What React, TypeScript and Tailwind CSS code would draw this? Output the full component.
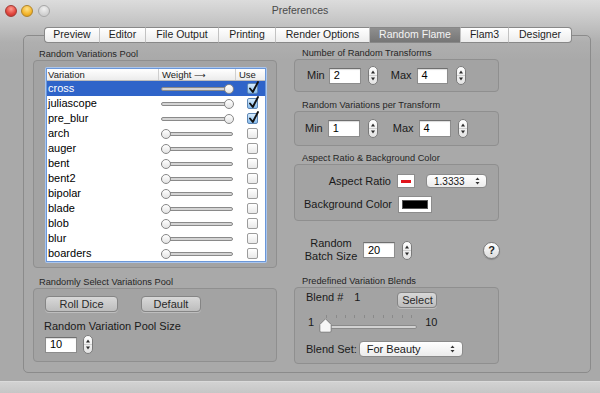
import React from "react";

const variations = [
  { name: "cross", on: true },
  { name: "juliascope", on: true },
  { name: "pre_blur", on: true },
  { name: "arch", on: false },
  { name: "auger", on: false },
  { name: "bent", on: false },
  { name: "bent2", on: false },
  { name: "bipolar", on: false },
  { name: "blade", on: false },
  { name: "blob", on: false },
  { name: "blur", on: false },
  { name: "boarders", on: false },
];

const tabs = [
  { label: "Preview", w: "w-[56px]" },
  { label: "Editor", w: "w-[46px]" },
  { label: "File Output", w: "w-[73px]" },
  { label: "Printing", w: "w-[57px]" },
  { label: "Render Options", w: "w-[94px]" },
  { label: "Random Flame", w: "w-[91px]", active: true },
  { label: "Flam3", w: "w-[48px]" },
  { label: "Designer", w: "w-[63px]" },
];

function Stepper({ className = "" }: { className?: string }) {
  return (
    <svg width="10" height="19" viewBox="0 0 10 19" className={"shrink-0 " + className}>
      <defs>
        <linearGradient id="stepg" x1="0" y1="0" x2="0" y2="1">
          <stop offset="0" stopColor="#ffffff" />
          <stop offset="1" stopColor="#e2e2e2" />
        </linearGradient>
      </defs>
      <rect x="0.5" y="0.5" width="9" height="18" rx="4.5" fill="url(#stepg)" stroke="#7a7a7a" />
      <line x1="1" y1="9.5" x2="9" y2="9.5" stroke="#d0d0d0" />
      <path d="M3 7.5 L5 4.5 L7 7.5 Z" fill="#2a2a2a" />
      <path d="M3 11.5 L5 14.5 L7 11.5 Z" fill="#2a2a2a" />
    </svg>
  );
}

function Field({ value, className = "" }: { value: string; className?: string }) {
  return (
    <div
      className={
        "h-[16px] bg-white border border-[#8c8c8c] border-t-[#6f6f6f] shadow-[inset_0_1px_1px_rgba(0,0,0,0.15)] flex items-center pl-[4px] text-[11px] text-black " +
        className
      }
    >
      {value}
    </div>
  );
}

function PopupArrows() {
  return (
    <svg width="5" height="8" viewBox="0 0 5 8" className="shrink-0">
      <path d="M0.5 3 L2.5 0.5 L4.5 3 Z" fill="#333" />
      <path d="M0.5 5 L2.5 7.5 L4.5 5 Z" fill="#333" />
    </svg>
  );
}

function Check({ on }: { on: boolean }) {
  if (!on) {
    return (
      <div className="w-[11px] h-[11px] rounded-[2px] border border-[#9c9c9c] bg-linear-to-b from-white to-[#e9e9e9]" />
    );
  }
  return (
    <div className="relative w-[11px] h-[11px] rounded-[2px] border border-[#5f87b5] bg-linear-to-b from-[#d6ebfc] to-[#88bdee]">
      <svg width="12" height="14" viewBox="0 0 12 14" className="absolute left-[0px] top-[-4px]">
        <path d="M2 8.5 L4.8 12 L10 2" fill="none" stroke="#111" strokeWidth="1.9" strokeLinecap="round" strokeLinejoin="round" />
      </svg>
    </div>
  );
}

function Group({ className = "", children }: { className?: string; children?: React.ReactNode }) {
  return (
    <div className={"rounded-[4px] border border-[#8f8f8f] bg-[#a3a3a3] " + className}>{children}</div>
  );
}

function Button({ label, className = "" }: { label: string; className?: string }) {
  return (
    <div
      className={
        "h-[16px] rounded-[4px] border border-[#858585] bg-linear-to-b from-[#d8d8d8] to-[#bdbdbd] shadow-[0_1px_0_rgba(255,255,255,0.3)] flex items-center justify-center text-[11px] text-[#2a2a2a] " +
        className
      }
    >
      {label}
    </div>
  );
}

export default function App() {
  return (
    <div className="w-[600px] h-[393px] overflow-hidden flex flex-col font-['Liberation_Sans',Arial,sans-serif] text-[#1a1a1a] bg-[linear-gradient(to_bottom,#dcdcdc_0px,#c5c5c5_22px,#afafaf_42px,#a9a9a9_60px)]">
      {/* Title bar */}
      <div className="h-[22px] grid grid-cols-[1fr_auto_1fr] items-center">
        <div className="flex items-center pl-[5px] gap-[3px]">
          <div className="w-[12px] h-[12px] rounded-full border border-[#a23a34] bg-[radial-gradient(circle_at_50%_30%,#ff9b8f,#e0443c_60%,#b8302a)]" />
          <div className="w-[12px] h-[12px] rounded-full border border-[#b0842a] bg-[radial-gradient(circle_at_50%_30%,#ffe28a,#f3b52b_60%,#cf8e18)] ml-[1px]" />
          <div className="w-[12px] h-[12px] rounded-full border border-[#a6a6a6] bg-[radial-gradient(circle_at_50%_30%,#f0f0f0,#cfcfcf_70%)] ml-[2px]" />
        </div>
        <div className="text-[10.5px] text-[#4a4a4a]">Preferences</div>
        <div />
      </div>

      {/* Tabs */}
      <div className="mt-[5px] ml-[44px] h-[16px] flex relative z-10">
        {tabs.map((t, i) => (
          <div
            key={t.label}
            className={
              t.w +
              " h-full flex items-center justify-center text-[10.5px] border-y border-[#888888] " +
              (i === 0 ? "border-l rounded-l-[4px] " : "") +
              (i === tabs.length - 1 ? "border-r rounded-r-[4px] " : "border-r border-r-[#c2c2c2] ") +
              (t.active
                ? "bg-linear-to-b from-[#8f8f8f] to-[#767676] text-[#f4f4f4] border-r-[#6e6e6e]"
                : "bg-linear-to-b from-white to-[#ececec] text-[#1e1e1e]")
            }
          >
            {t.label}
          </div>
        ))}
      </div>

      {/* Tab box */}
      <div className="-mt-[8px] ml-[23px] w-[568px] h-[338px] rounded-[5px] border border-[#8b8b8b] flex pl-[9px] gap-[17px]">
        {/* Left column */}
        <div className="w-[244px] pt-[12px] flex flex-col">
          <div className="h-[12px] leading-[12px] pl-[6px] text-[9.25px] text-[#262626]">Random Variations Pool</div>
          <Group className="h-[208px] pt-[6px] pl-[11px]">
            <div className="w-[222px] p-[1px] rounded-[2px] bg-[#aac6ee]">
              <div className="border border-[#6b97d8] bg-white">
                <div className="h-[12px] flex border-b border-[#bdbdbd] bg-linear-to-b from-white to-[#ececec] text-[9.5px] leading-[11px] text-[#222]">
                  <div className="w-[111px] pl-[1px]">Variation</div>
                  <div className="w-[77px] border-l border-[#cfcfcf] pl-[3px]">
                    Weight <span className="font-['DejaVu_Sans'] text-[8px]">⟶</span>
                  </div>
                  <div className="flex-1 border-l border-[#cfcfcf] pl-[3px]">Use</div>
                </div>
                {variations.map((v, i) => (
                  <div
                    key={v.name}
                    className={
                      "h-[15px] flex items-center " + (i === 0 ? "bg-[#2f64c9] text-white" : "text-black")
                    }
                  >
                    <div className="w-[111px] pl-[1px] text-[11px]">{v.name}</div>
                    <div className="w-[77px] relative h-full flex items-center">
                      <div className="relative ml-[3px] w-[72px] h-[4px] rounded-full border border-[#8a8a8a] bg-[#d4d4d4]">
                        <div
                          className={
                            "absolute top-[-4px] w-[10px] h-[10px] rounded-full border border-[#888888] bg-linear-to-b from-white to-[#e4e4e4] " +
                            (v.on ? "left-[62px]" : "left-[-1px]")
                          }
                        />
                      </div>
                    </div>
                    <div className="flex-1 pl-[12px]">
                      <Check on={v.on} />
                    </div>
                  </div>
                ))}
              </div>
            </div>
          </Group>

          <div className="mt-[8px] h-[12px] leading-[12px] pl-[6px] text-[9.25px] text-[#262626]">
            Randomly Select Variations Pool
          </div>
          <Group className="h-[74px] pt-[7px] pl-[10px]">
            <div className="flex">
              <Button label="Roll Dice" className="ml-[1px] w-[73px]" />
              <Button label="Default" className="ml-[23px] w-[60px]" />
            </div>
            <div className="mt-[7px] h-[14px] leading-[14px] text-[11px] text-[#1a1a1a]">Random Variation Pool Size</div>
            <div className="mt-[2px] h-[19px] flex items-center">
              <Field value="10" className="ml-[1px] w-[32px]" />
              <Stepper className="ml-[6px]" />
            </div>
          </Group>
        </div>

        {/* Right column */}
        <div className="w-[205px] pt-[11px] flex flex-col">
          <div className="h-[12px] leading-[12px] pl-[8px] text-[9.25px] text-[#262626]">Number of Random Transforms</div>
          <Group className="h-[33px] flex items-center pl-[12px] text-[11px]">
            <span>Min</span>
            <Field value="2" className="ml-[4px] w-[32px]" />
            <Stepper className="ml-[7px]" />
            <span className="ml-[13px]">Max</span>
            <Field value="4" className="ml-[5px] w-[31px]" />
            <Stepper className="ml-[8px]" />
          </Group>

          <div className="mt-[7px] h-[12px] leading-[12px] pl-[8px] text-[9.25px] text-[#262626]">
            Random Variations per Transform
          </div>
          <Group className="h-[35px] flex items-center pl-[10px] text-[11px]">
            <span>Min</span>
            <Field value="1" className="ml-[5px] w-[32px] h-[17px]" />
            <Stepper className="ml-[8px]" />
            <span className="ml-[15px]">Max</span>
            <Field value="4" className="ml-[5px] w-[32px] h-[17px]" />
            <Stepper className="ml-[7px]" />
          </Group>

          <div className="mt-[6px] h-[12px] leading-[12px] pl-[8px] text-[9.25px] text-[#262626]">
            Aspect Ratio &amp; Background Color
          </div>
          <Group className="h-[57px] pt-[8px] flex flex-col text-[11px]">
            <div className="h-[16px] flex items-center">
              <div className="w-[96px] text-right">Aspect Ratio</div>
              <div className="ml-[6px] w-[18px] h-[14px] bg-white border border-[#8c8c8c] flex items-center justify-center">
                <div className="w-[10px] h-[3px] bg-[#e0141b]" />
              </div>
              <div className="ml-[11px] w-[61px] h-[14px] rounded-[4px] border border-[#8a8a8a] bg-linear-to-b from-white to-[#ececec] flex items-center justify-between pl-[7px] pr-[6px] text-[10px]">
                <span>1.3333</span>
                <PopupArrows />
              </div>
            </div>
            <div className="mt-[7px] h-[17px] flex items-center">
              <div className="w-[97px] text-right">Background Color</div>
              <div className="ml-[6px] w-[34px] h-[17px] bg-white border border-[#8c8c8c] flex items-center justify-center">
                <div className="w-[26px] h-[9px] bg-black border border-[#555]" />
              </div>
            </div>
          </Group>

          <div className="h-[54px] pt-[4px] flex items-center">
            <div className="ml-[8px] w-[58px] text-center text-[11px] leading-[13px] whitespace-nowrap">
              Random
              <br />
              Batch Size
            </div>
            <Field value="20" className="ml-[3px] w-[32px]" />
            <Stepper className="ml-[7px]" />
            <div className="ml-auto -mr-[1px] w-[17px] h-[17px] rounded-full border border-[#7c7c7c] bg-linear-to-b from-white to-[#dcdcdc] shadow-[0_1px_1px_rgba(0,0,0,0.2)] flex items-center justify-center text-[11px] font-bold text-[#222]">
              ?
            </div>
          </div>

          <div className="h-[12px] leading-[12px] pl-[8px] text-[9.25px] text-[#262626]">Predefined Variation Blends</div>
          <Group className="h-[77px] pt-[3px] pl-[11px] text-[11px]">
            <div className="h-[17px] flex items-start">
              <span className="leading-[13px]">Blend #</span>
              <span className="ml-[11px] leading-[13px]">1</span>
              <Button label="Select" className="ml-[37px] mt-[1px] w-[40px] h-[15px]" />
            </div>
            <div className="mt-[6px] h-[20px] flex items-center">
              <span className="ml-[2px] -mt-[4px]">1</span>
              <div className="relative ml-[6px] w-[97px] h-[20px]">
                <div className="absolute left-[6px] right-[5px] top-[1px] h-[3px] flex justify-between">
                  {Array.from({ length: 10 }).map((_, i) => (
                    <div key={i} className="w-[1px] h-[3px] bg-[#8a8a8a]" />
                  ))}
                </div>
                <div className="absolute left-0 right-0 top-[11px] h-[4px] rounded-full border border-[#8a8a8a] bg-[#d2d2d2]" />
                <svg width="13" height="15" viewBox="0 0 13 15" className="absolute left-[-1px] top-[4px]">
                  <path
                    d="M6.5 0.8 L12.2 6.5 L12.2 13 Q12.2 14.2 11 14.2 L2 14.2 Q0.8 14.2 0.8 13 L0.8 6.5 Z"
                    fill="#f6f6f6"
                    stroke="#7d7d7d"
                  />
                </svg>
              </div>
              <span className="ml-[8px] -mt-[4px]">10</span>
            </div>
            <div className="mt-[7px] h-[16px] flex items-center">
              <span>Blend Set:</span>
              <div className="ml-[2px] w-[104px] h-[16px] rounded-[4px] border border-[#8a8a8a] bg-linear-to-b from-white to-[#ececec] flex items-center justify-between pl-[7px] pr-[7px]">
                <span>For Beauty</span>
                <PopupArrows />
              </div>
            </div>
          </Group>
        </div>
      </div>

      <div className="flex-1" />
      <div className="h-[12px] border-t border-[#dadada] bg-linear-to-b from-[#d2d2d2] to-[#c6c6c6]" />
    </div>
  );
}
